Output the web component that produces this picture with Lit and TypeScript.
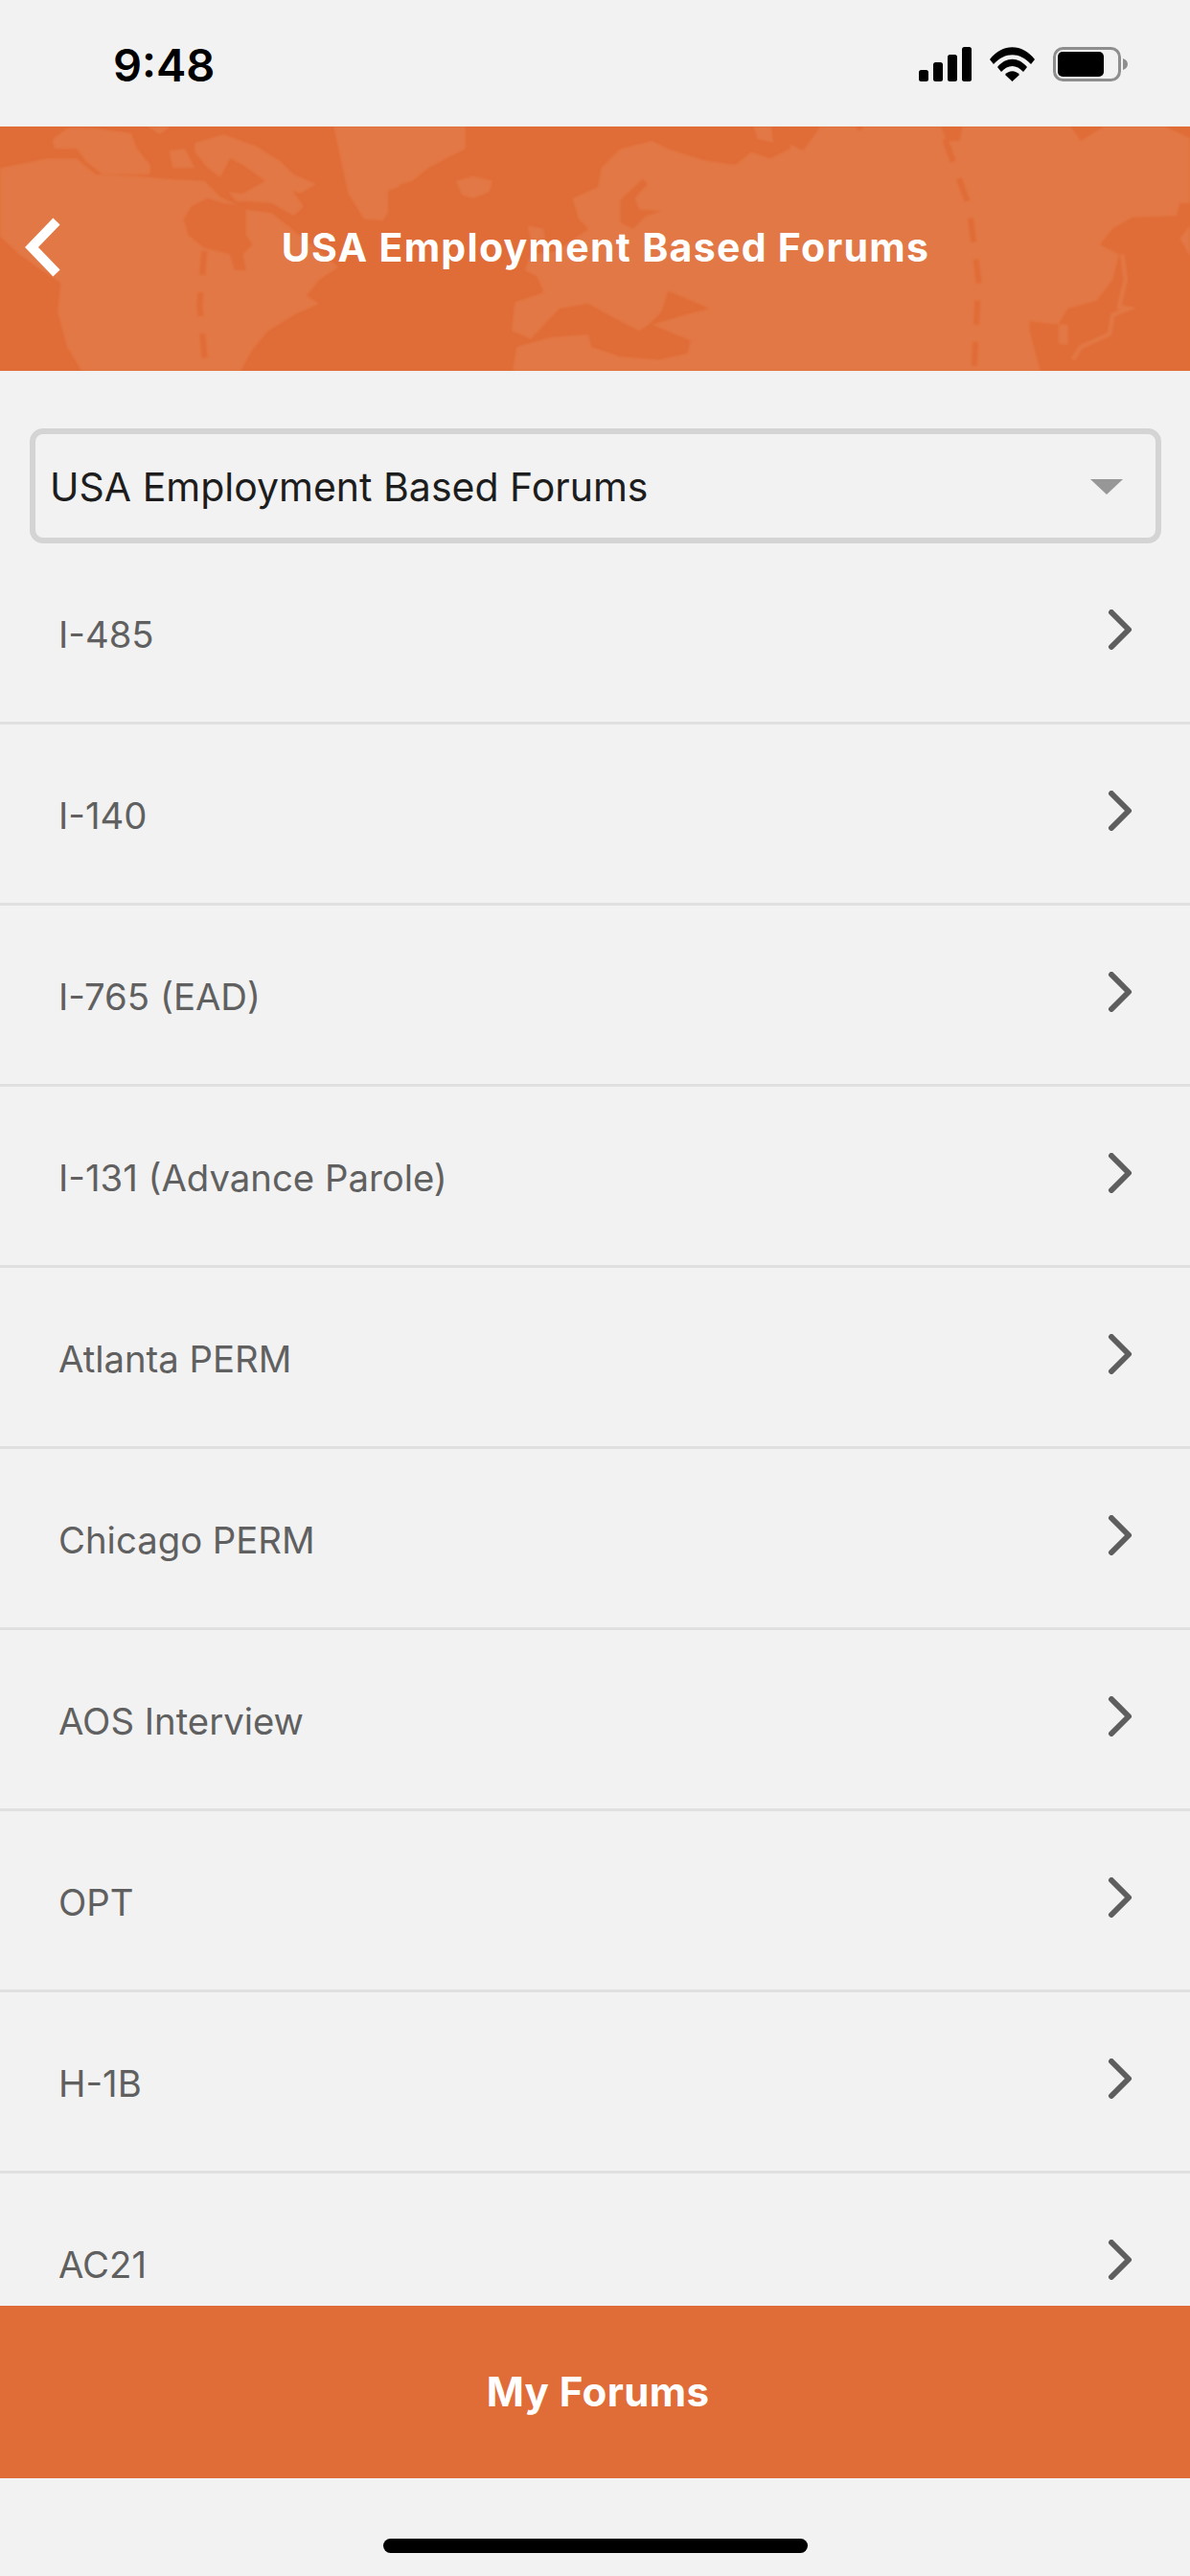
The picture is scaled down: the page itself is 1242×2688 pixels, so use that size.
import { LitElement, html, css, svg } from 'lit';
import { customElement, property } from 'lit/decorators.js';

const FORUMS = [
  'I-485',
  'I-140',
  'I-765 (EAD)',
  'I-131 (Advance Parole)',
  'Atlanta PERM',
  'Chicago PERM',
  'AOS Interview',
  'OPT',
  'H-1B',
  'AC21',
];

// world map behind the header, traced from 3x crops, one group per crop
const MAP_A = svg`
  <g class="land">
    <path d="M165,40 L210,5 L290,5 L410,20 L430,70 L470,120 L470,150 L320,150 L270,110 L240,70 L170,70Z" />
    <path d="M430,-20 L560,-20 L500,25Z" />
    <path d="M530,75 L580,70 L610,130 L540,130Z" />
    <path d="M610,50 L700,25 L800,60 L880,110 L920,150 L990,180 L940,210 L915,200 L950,250 L920,280 L850,240 L780,235 L740,235 L715,205 L760,210 L830,170 L760,120 L720,100 L690,160 L650,130 L610,80Z" />
    <path d="M0,130 L150,100 L240,100 L300,150 L430,155 L540,165 L640,170 L690,220 L770,260 L850,270 L900,310 L1060,440 L1000,480 L960,530 L1000,555 L930,585 L840,640 L790,700 L740,790 L270,790 L210,690 L180,580 L190,490 L130,450 L60,400 L0,345Z" />
    <path d="M1040,-20 L1250,-20 L1250,190 L1215,200 L1215,270 L1200,295 L1140,290 L1090,210Z" />
  </g>
  <path class="sea" d="M575,290 L600,250 L650,225 L700,240 L770,250 L770,340 L790,370 L760,400 L770,450 L735,450 L720,400 L640,380 L590,340Z" />
  <path class="route" d="M640,390 L625,560 L642,735" />
`;

const MAP_B = svg`
  <g class="land">
    <path d="M0,-20 L215,-20 L215,70 L100,130 L50,170 L0,185Z" />
    <path d="M185,170 L240,155 L300,170 L290,205 L240,225 L205,215Z" />
    <path d="M410,310 L460,320 L465,350 L420,360Z" />
    <path d="M1110,-20 L1170,-20 L1180,50 L1130,40Z" />
    <path d="M550,225 L630,190 L640,130 L700,70 L800,45 L850,70 L960,105 L1060,120 L1110,80 L1170,100 L1250,60 L1250,790 L360,790 L375,690 L480,660 L600,650 L610,690 L700,720 L820,730 L910,710 L920,670 L870,650 L800,620 L900,590 L980,570 L850,515 L830,580 L790,620 L760,640 L700,610 L600,555 L510,570 L420,665 L360,640 L370,550 L460,520 L440,470 L400,450 L420,400 L500,390 L600,320 L570,290Z" />
  </g>
  <path class="sea" d="M770,165 L785,180 L745,225 L760,260 L830,265 L780,280 L740,320 L700,300 L700,230Z" />
`;

const MAP_C = svg`
  <path class="land" d="M-10,-20 L1250,-20 L1250,790 L-10,790Z" />
  <g class="sea">
    <path d="M-10,-20 L100,-20 L30,75 L-10,55Z" />
    <path d="M180,-20 L240,-20 L205,15Z" />
    <path d="M455,-20 L535,-20 L520,45 L480,45Z" />
    <path d="M855,-20 L1005,-20 L900,45Z" />
    <path d="M1120,-20 L1250,-20 L1250,40Z" />
    <path d="M960,370 L1000,320 L1060,285 L1200,280 L1210,240 L1250,240 L1250,790 L780,790 L740,640 L740,610 L830,620 L860,570 L950,545 L1000,480 L1020,400Z" />
  </g>
  <path class="land" d="M1250,300 L1210,350 L1250,420Z" />
  <path class="land" d="M830,620 L860,620 L860,685 L830,680Z" />
  <path class="japan" d="M1030,400 L1040,480 L1020,565 L1050,570 L1000,590 L990,650 L900,690 L875,730" />
  <path class="route" d="M475,40 L550,250 L580,480 L565,780" />
`;

@customElement('forum-row')
export class ForumRow extends LitElement {
  @property() label = '';

  static styles = css`
    :host {
      display: flex;
      flex: none;
      box-sizing: border-box;
      height: 189px;
      align-items: center;
      justify-content: space-between;
      padding: 0 60px 0 61px;
      border-bottom: 3px solid #e0e0e0;
    }
    .label {
      font-family: Inter, 'Liberation Sans', sans-serif;
      font-size: 38.3px;
      color: #606060;
      margin-top: 3px;
    }
    svg {
      display: block;
      margin-top: -6px;
    }
  `;

  render() {
    return html`
      <span class="label">${this.label}</span>
      <svg width="26" height="42" viewBox="0 0 26 42">
        <path d="M4 3 L22 21 L4 39" fill="none" stroke="#5e5e5e" stroke-width="6" stroke-linecap="round" stroke-linejoin="round" />
      </svg>
    `;
  }
}

@customElement('app-root')
export class AppRoot extends LitElement {
  static styles = css`
    :host {
      display: flex;
      flex-direction: column;
      width: 1242px;
      height: 2688px;
      overflow: hidden;
      background: #f2f2f2;
      font-family: Inter, 'Liberation Sans', sans-serif;
    }
    .status {
      flex: none;
      height: 132px;
      box-sizing: border-box;
      padding: 0 65px 0 118px;
      display: flex;
      align-items: flex-start;
      justify-content: space-between;
    }
    .time {
      font-size: 47px;
      font-weight: 600;
      color: #000;
      line-height: 47px;
      margin-top: 44px;
    }
    .status-icons {
      display: flex;
      align-items: flex-start;
      gap: 19px;
      margin-top: 49px;
    }
    .status-icons svg {
      display: block;
    }
    .header {
      flex: none;
      position: relative;
      height: 255px;
      box-sizing: border-box;
      padding: 0 0 4px 22px;
      background: #e06c37;
      display: flex;
      align-items: center;
      justify-content: center;
      overflow: hidden;
    }
    .map {
      position: absolute;
      inset: 0;
      width: 100%;
      height: 100%;
      filter: blur(1.2px);
    }
    .land {
      fill: #e27845;
    }
    .sea {
      fill: #e06c37;
    }
    .route {
      fill: none;
      stroke: #e06c37;
      stroke-width: 18;
      stroke-dasharray: 75 55;
    }
    .japan {
      fill: none;
      stroke: #e27845;
      stroke-width: 14;
    }
    .back {
      position: absolute;
      left: 24px;
      top: 93px;
    }
    .title {
      position: relative;
      font-size: 41px;
      font-weight: 700;
      letter-spacing: 1.3px;
      color: #fff;
    }
    .content {
      flex: 1;
      min-height: 0;
      display: flex;
      flex-direction: column;
      overflow: hidden;
    }
    .select {
      flex: none;
      box-sizing: border-box;
      height: 120px;
      margin: 60px 30px 0 31px;
      padding: 2px 34px 0 15px;
      border: 6px solid #d4d4d4;
      border-radius: 14px;
      display: flex;
      align-items: center;
      justify-content: space-between;
      font-size: 41px;
      color: #1d1d1d;
    }
    .caret {
      width: 0;
      height: 0;
      border-left: 17px solid transparent;
      border-right: 17px solid transparent;
      border-top: 16px solid #979797;
    }
    .footer {
      flex: none;
      height: 180px;
      box-sizing: border-box;
      padding: 0 0 2px 6px;
      background: #e06c37;
      color: #fff;
      display: flex;
      align-items: center;
      justify-content: center;
      font-size: 42px;
      font-weight: 700;
      letter-spacing: 0.4px;
    }
    .home {
      flex: none;
      height: 102px;
      display: flex;
      justify-content: center;
      padding-top: 63px;
      box-sizing: border-box;
    }
    .home-bar {
      width: 443px;
      height: 15px;
      border-radius: 8px;
      background: #000;
    }
  `;

  render() {
    return html`
      <div class="status">
        <span class="time">9:48</span>
        <div class="status-icons">
          <svg width="55" height="36" viewBox="0 0 55 36">
            <rect x="0" y="24" width="10" height="12" rx="2.5" />
            <rect x="15" y="16" width="10" height="20" rx="2.5" />
            <rect x="30" y="8" width="10" height="28" rx="2.5" />
            <rect x="45" y="0" width="10" height="36" rx="2.5" />
          </svg>
          <svg width="47" height="36" viewBox="0 0 47 36">
            <path d="M0 13 C13 -4 34 -4 47 13 L43 18 C31 5 16 5 4 18Z" />
            <path d="M8 21 C17 10 30 10 39 21 L35 26 C28 18 19 18 12 26Z" />
            <path d="M16 29 C20 24 27 24 31 29 L23.5 36Z" />
          </svg>
          <svg width="78" height="36" viewBox="0 0 78 36">
            <rect x="1.5" y="1.5" width="68" height="33" rx="9" fill="none" stroke="#8e8e8e" stroke-width="3" />
            <rect x="5" y="5" width="48" height="26" rx="5" />
            <path d="M73 12 C76 13 78 15 78 18 C78 21 76 23 73 24Z" fill="#8e8e8e" />
          </svg>
        </div>
      </div>
      <div class="header">
        <svg class="map" viewBox="0 0 3726 765" preserveAspectRatio="none">
          <g>${MAP_A}</g>
          <g transform="translate(1242 0)">${MAP_B}</g>
          <g transform="translate(2484 0)">${MAP_C}</g>
        </svg>
        <svg class="back" width="42" height="68" viewBox="0 0 42 68">
          <path d="M35 6 L9 33 L35 60" fill="none" stroke="#fff" stroke-width="10" />
        </svg>
        <span class="title">USA Employment Based Forums</span>
      </div>
      <div class="content">
        <div class="select">
          <span>USA Employment Based Forums</span>
          <span class="caret"></span>
        </div>
        ${FORUMS.map((f) => html`<forum-row .label=${f}></forum-row>`)}
      </div>
      <div class="footer">My Forums</div>
      <div class="home"><div class="home-bar"></div></div>
    `;
  }
}
